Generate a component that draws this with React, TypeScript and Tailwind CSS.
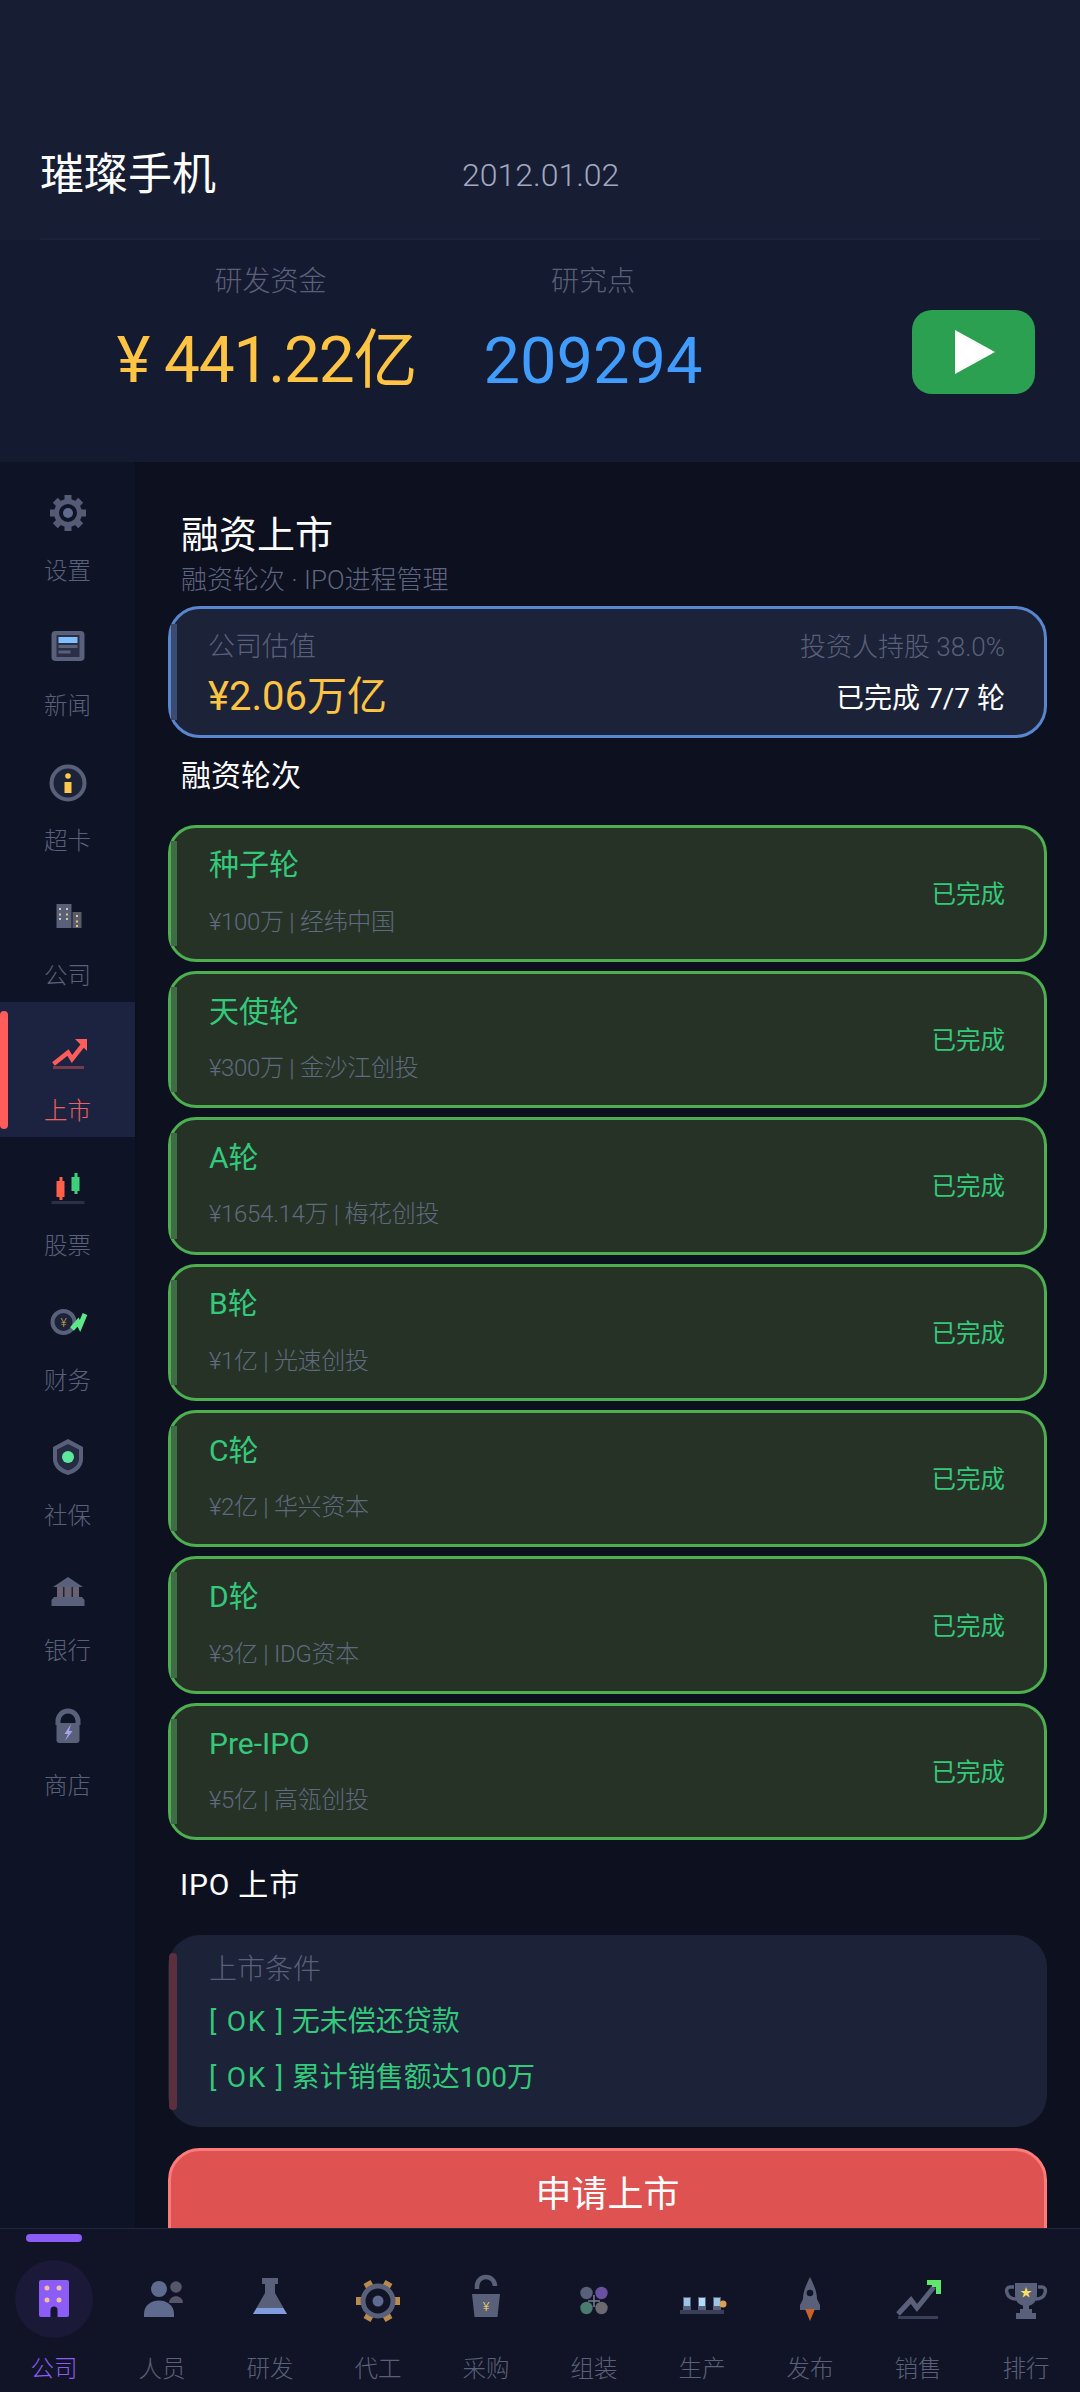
const rounds = [
  { name: "种子轮", info: "¥100万 | 经纬中国" },
  { name: "天使轮", info: "¥300万 | 金沙江创投" },
  { name: "A轮", info: "¥1654.14万 | 梅花创投" },
  { name: "B轮", info: "¥1亿 | 光速创投" },
  { name: "C轮", info: "¥2亿 | 华兴资本" },
  { name: "D轮", info: "¥3亿 | IDG资本" },
  { name: "Pre-IPO", info: "¥5亿 | 高瓴创投" },
];

const G = "#596079";

function GearIcon() {
  return (
    <svg width="48" height="48" viewBox="0 0 48 48">
      <g fill="#555b75">
        {[0, 45, 90, 135, 180, 225, 270, 315].map((a) => (
          <rect key={a} x="20.5" y="7" width="7" height="8" transform={`rotate(${a} 24 25)`} />
        ))}
      </g>
      <circle cx="24" cy="25" r="11.5" fill="none" stroke="#555b75" strokeWidth="5" />
      <circle cx="24" cy="25" r="5" fill="#5f6a8f" />
    </svg>
  );
}

function NewsIcon() {
  return (
    <svg width="48" height="48" viewBox="0 0 48 48">
      <rect x="7.5" y="8" width="33" height="30" rx="4" fill={G} />
      <rect x="12.5" y="12" width="23" height="22" fill="#2a2f45" />
      <rect x="14.5" y="14" width="19" height="6" fill="#7fbfff" />
      <rect x="14.5" y="22" width="19" height="3" fill={G} />
      <rect x="14.5" y="27.500" width="12" height="3" fill={G} />
    </svg>
  );
}

function CardIcon() {
  return (
    <svg width="48" height="48" viewBox="0 0 48 48">
      <circle cx="24" cy="25" r="16.500" fill="#1c2238" stroke={G} strokeWidth="4" />
      <circle cx="24" cy="18" r="2.800" fill="#ffc84a" />
      <rect x="20.500" y="24" width="7" height="11" fill="#ffc84a" />
    </svg>
  );
}

function CompanyIcon() {
  const dots = [6, 11.5, 16];
  return (
    <svg width="48" height="48" viewBox="0 0 48 48">
      <rect x="12.500" y="11" width="15" height="24" fill={G} />
      <rect x="28.500" y="19" width="9" height="16" fill="#5a5d68" />
      {dots.map((d) => (
        <g key={d} fill="#d8c890">
          <rect x="15" y={d + 9} width="2" height="2" />
          <rect x="22" y={d + 9} width="2" height="2" />
          <rect x="32" y={d + 16} width="2" height="2" />
        </g>
      ))}
    </svg>
  );
}

function ListingIcon() {
  return (
    <svg width="48" height="48" viewBox="0 0 48 48">
      <rect x="9" y="38" width="31" height="3" fill="#ff5c5c" opacity="0.4" />
      <path d="M9.500 36 L24 24.500 L28 31 L39 17" fill="none" stroke="#ff5c5c" strokeWidth="4.500" />
      <path d="M31 11 H43 V23 Z" fill="#ff5c5c" />
    </svg>
  );
}

function StockIcon() {
  return (
    <svg width="48" height="48" viewBox="0 0 48 48">
      <rect x="7.500" y="38" width="33" height="3" fill="#2c3048" />
      <rect x="15.500" y="14" width="3" height="23" fill="#ff6048" />
      <rect x="12.500" y="18" width="8" height="16" fill="#ff6048" />
      <rect x="30.500" y="10" width="3" height="21" fill="#3ecf7a" />
      <rect x="27.500" y="14" width="8" height="14" fill="#3ecf7a" />
    </svg>
  );
}

function FinanceIcon() {
  return (
    <svg width="48" height="48" viewBox="0 0 48 48">
      <circle cx="19.500" cy="24" r="11" fill="#1c2238" stroke={G} strokeWidth="4" />
      <text x="19.500" y="29" textAnchor="middle" fontSize="12" fill="#d8a848">¥</text>
      <path d="M28 31 L34 24 L36 28 L41 16" fill="none" stroke="#5ce88a" strokeWidth="5" />
    </svg>
  );
}

function ShieldIcon() {
  return (
    <svg width="48" height="48" viewBox="0 0 48 48">
      <path d="M24 6 L39 14 V26 C39 35 31 40 24 42 C17 40 9 35 9 26 V14 Z" fill={G} />
      <path d="M24 11 L35 16.500 V26 C35 32 29 36 24 37.500 C19 36 13 32 13 26 V16.500 Z" fill="#262b44" />
      <circle cx="24" cy="24" r="6" fill="#5ce89a" />
    </svg>
  );
}

function BankIcon() {
  return (
    <svg width="48" height="48" viewBox="0 0 48 48">
      <path d="M24 9 L39 19 H9 Z" fill={G} />
      <rect x="13" y="19" width="22" height="11" fill="#6b6070" />
      <rect x="19" y="19" width="1.500" height="11" fill="#1c2238" />
      <rect x="27.500" y="19" width="1.500" height="11" fill="#1c2238" />
      <path d="M10 29 H38 L40.500 32 V38 H7.500 V32 Z" fill={G} />
    </svg>
  );
}

function ShopIcon() {
  return (
    <svg width="48" height="48" viewBox="0 0 48 48">
      <path d="M14 22 V18 A10 10 0 0 1 34 18 V22" fill="none" stroke={G} strokeWidth="5" />
      <rect x="12.500" y="20" width="23" height="20" rx="3" fill={G} />
      <path d="M27 21 L20.500 31 H24 L21 38 L28.500 28 H25 Z" fill="#a8a0f0" />
    </svg>
  );
}

const sideItems = [
  { label: "设置", icon: <GearIcon /> },
  { label: "新闻", icon: <NewsIcon /> },
  { label: "超卡", icon: <CardIcon /> },
  { label: "公司", icon: <CompanyIcon /> },
  { label: "上市", icon: <ListingIcon />, active: true },
  { label: "股票", icon: <StockIcon /> },
  { label: "财务", icon: <FinanceIcon /> },
  { label: "社保", icon: <ShieldIcon /> },
  { label: "银行", icon: <BankIcon /> },
  { label: "商店", icon: <ShopIcon /> },
];

// bottom icons use a 64x64 box centred on the tab, y origin = 2268 in the page
function NavCompany() {
  return (
    <svg width="64" height="64" viewBox="0 0 64 64">
      <rect x="17" y="11" width="30" height="37" rx="2" fill="#8b5cf6" />
      <g fill="#f0c0a0">
        <circle cx="25" cy="19" r="2.500" />
        <circle cx="37" cy="19" r="2.500" />
        <circle cx="25" cy="31" r="2.500" />
        <circle cx="37" cy="31" r="2.500" />
      </g>
      <path d="M28.500 48 V41 A3.500 3.500 0 0 1 35.500 41 V48 Z" fill="#15152e" />
    </svg>
  );
}
function NavPeople() {
  return (
    <svg width="64" height="64" viewBox="0 0 64 64">
      <circle cx="46" cy="18" r="5.800" fill="#55566a" />
      <path d="M39 34 C39 25 53 25 53 34 Z" fill="#55566a" />
      <circle cx="29" cy="20" r="8" fill="#5f6a8f" />
      <path d="M14 48 V45 C14 27 44 27 44 45 V48 Z" fill="#5f6a8f" />
    </svg>
  );
}
function NavLab() {
  return (
    <svg width="64" height="64" viewBox="0 0 64 64">
      <rect x="24" y="9" width="16" height="6" fill={G} />
      <path d="M27 15 H37 V24 L49 45 H15 L27 24 Z" fill={G} />
      <path d="M18.800 39 H45.200 L49 45 H15 Z" fill="#7f9cdc" />
    </svg>
  );
}
function NavOem() {
  return (
    <svg width="64" height="64" viewBox="0 0 64 64">
      <g fill="#b98a4c">
        {[0, 60, 120, 180, 240, 300].map((a) => (
          <rect key={a} x="28" y="10" width="8" height="8" transform={`rotate(${a + 30} 32 32)`} />
        ))}
      </g>
      <circle cx="32" cy="32" r="15" fill="#111426" stroke={G} strokeWidth="5" />
      <circle cx="32" cy="32" r="5.500" fill="#5f6a8f" />
    </svg>
  );
}
function NavBuy() {
  return (
    <svg width="64" height="64" viewBox="0 0 64 64">
      <path d="M23 20 V17 A9 9 0 0 1 41 17" fill="none" stroke={G} strokeWidth="4.500" />
      <path d="M18 25 H46 L43.500 48 H20.500 Z" fill={G} />
      <text x="32" y="42" textAnchor="middle" fontSize="13" fill="#ffdf60">¥</text>
    </svg>
  );
}
function NavAssemble() {
  return (
    <svg width="64" height="64" viewBox="0 0 64 64">
      <circle cx="24.500" cy="24" r="6.200" fill={G} />
      <circle cx="39.500" cy="24" r="6.200" fill="#6a50a0" />
      <circle cx="24.500" cy="39" r="6.200" fill="#4b7a6e" />
      <circle cx="39.500" cy="39" r="6.200" fill="#6a6a70" />
      <path d="M32 26 V38 M26 32 H38" stroke="#777c90" strokeWidth="1.500" />
    </svg>
  );
}
function NavLine() {
  return (
    <svg width="64" height="64" viewBox="0 0 64 64">
      <rect x="10" y="41" width="44" height="4" fill="#3a3f58" />
      {[13, 28, 43].map((x, i) => (
        <g key={x}>
          <rect x={x} y="28" width="8" height="13" fill={G} />
          <rect x={x + 1} y="29" width="6" height="8" fill={i === 1 ? "#b0dcff" : "#9cc4e8"} />
        </g>
      ))}
      <circle cx="53" cy="35" r="3.500" fill="#d8a050" />
    </svg>
  );
}
function NavRocket() {
  return (
    <svg width="64" height="64" viewBox="0 0 64 64">
      <path d="M32 8 C37 18 39 24 39 30 L42 36 V41 H22 V36 L25 30 C25 24 27 18 32 8 Z" fill={G} />
      <circle cx="32" cy="24" r="3.300" fill="#111426" />
      <path d="M27 40 H37 L32 52 Z" fill="#c8622a" />
    </svg>
  );
}
function NavSales() {
  return (
    <svg width="64" height="64" viewBox="0 0 64 64">
      <rect x="12" y="47" width="40" height="3" fill="#3a3f58" />
      <path d="M12 45 L25 31 L31 39 L48 18" fill="none" stroke={G} strokeWidth="5" />
      <path d="M41 11 H55 V25 H50 V16 H41 Z" fill="#5ce86a" />
      <rect x="46" y="14" width="6" height="4" fill="#5ce86a" />
    </svg>
  );
}
function NavRank() {
  return (
    <svg width="64" height="64" viewBox="0 0 64 64">
      <path d="M20 18 H16 C13 18 12 21 13 24 C14 28 18 30 22 30" fill="none" stroke={G} strokeWidth="3.500" />
      <path d="M44 18 H48 C51 18 52 21 51 24 C50 28 46 30 42 30" fill="none" stroke={G} strokeWidth="3.500" />
      <path d="M21 14 H43 V26 C43 34 37 37 32 37 C27 37 21 34 21 26 Z" fill={G} />
      <rect x="29" y="36" width="6" height="8" fill={G} />
      <rect x="26" y="40" width="12" height="5" fill={G} />
      <rect x="22" y="44" width="20" height="6" fill={G} />
      <text x="32" y="28" textAnchor="middle" fontSize="12" fill="#ffdf60">★</text>
    </svg>
  );
}

const navItems = [
  { label: "公司", icon: <NavCompany />, active: true },
  { label: "人员", icon: <NavPeople /> },
  { label: "研发", icon: <NavLab /> },
  { label: "代工", icon: <NavOem /> },
  { label: "采购", icon: <NavBuy /> },
  { label: "组装", icon: <NavAssemble /> },
  { label: "生产", icon: <NavLine /> },
  { label: "发布", icon: <NavRocket /> },
  { label: "销售", icon: <NavSales /> },
  { label: "排行", icon: <NavRank /> },
];

export default function App() {
  return (
    <div className="w-[1080px] h-[2392px] flex flex-col overflow-hidden bg-[#0d101f] font-['Roboto','Noto_Sans_CJK_SC',sans-serif] font-light">
      {/* top header */}
      <header className="h-[240px] bg-[#171d33] flex flex-col justify-end shrink-0">
        <div className="flex items-end pl-[40px] pb-[38px]">
          <h1 className="w-[422px] text-[44px] leading-[50px] text-white font-normal">璀璨手机</h1>
          <span className="text-[32px] leading-[50px] text-[#a0a8c0]">2012.01.02</span>
        </div>
        <div className="mx-[40px] h-[2px] bg-[#1b2138]" />
      </header>

      {/* funds */}
      <section className="h-[222px] bg-[#141a2f] flex items-start pl-[118px] pr-[45px] shrink-0">
        <div className="w-[297px] flex flex-col items-center pt-[22px]">
          <span className="pl-[8px] text-[28px] leading-[40px] text-[#5a6079]">研发资金</span>
          <span className="mt-[18.5px] text-[64px] leading-[80px] tracking-[-1.2px] text-[#ffc444] font-normal whitespace-nowrap">¥ 441.22亿</span>
        </div>
        <div className="ml-[69px] w-[218px] flex flex-col items-center pt-[22px]">
          <span className="text-[28px] leading-[40px] text-[#5a6079]">研究点</span>
          <span className="mt-[18.5px] text-[65px] leading-[80px] text-[#409cff] font-normal">209294</span>
        </div>
        <button className="ml-auto mt-[70px] w-[123px] h-[84px] rounded-[20px] bg-[#2aa050] flex items-center justify-center">
          <svg className="ml-[3px]" width="40" height="44" viewBox="0 0 40 44">
            <path d="M0 0 L40 22 L0 44 Z" fill="#ffffff" />
          </svg>
        </button>
      </section>

      <div className="h-[1766px] flex shrink-0 overflow-hidden">
        {/* left sidebar */}
        <aside className="w-[137px] shrink-0 bg-[#0f1326] border-r-2 border-[#0b0e1c] flex flex-col">
          {sideItems.map((item) => (
            <div
              key={item.label}
              className={`relative h-[135px] flex flex-col items-center pt-[26px] ${item.active ? "bg-[#1c2340]" : ""}`}
            >
              {item.active && <div className="absolute left-0 top-[9px] w-[8px] h-[118px] rounded-full bg-[#ff5c5c]" />}
              {item.icon}
              <span className={`mt-[19px] text-[23.500px] leading-[32px] ${item.active ? "text-[#f06060]" : "text-[#5a6079]"}`}>
                {item.label}
              </span>
            </div>
          ))}
        </aside>

        {/* main panel */}
        <main className="flex-1 pl-[31px] pr-[33px] pt-[48px] overflow-hidden">
          <h2 className="pl-[13px] text-[38px] leading-[50px] text-white font-normal">融资上市</h2>
          <p className="pl-[13px] mt-[3px] text-[26px] leading-[34px] text-[#5f6580]">融资轮次 · IPO进程管理</p>

          <div className="relative mt-[8.5px] h-[132px] rounded-[32px] border-[3px] border-[#5a86d0] bg-[#1c2238] flex justify-between pl-[37px] pr-[39px] pt-[18.5px]">
            <div className="absolute left-0 top-[15px] bottom-[15px] w-[6px] bg-[#3a4a70]" />
            <div>
              <div className="text-[27px] leading-[40px] text-[#5a6079]">公司估值</div>
              <div className="mt-[3px] text-[40px] leading-[54px] text-[#ffc444] font-normal">¥2.06万亿</div>
            </div>
            <div className="text-right">
              <div className="text-[26px] leading-[40px] text-[#5a6079]">投资人持股 38.0%</div>
              <div className="mt-[9.5px] text-[28px] leading-[44px] text-white font-normal">已完成 7/7 轮</div>
            </div>
          </div>

          <h3 className="pl-[13px] mt-[17px] text-[30px] leading-[42px] text-white font-normal">融资轮次</h3>

          <div className="mt-[28px] flex flex-col gap-[9px]">
            {rounds.map((r) => (
              <div
                key={r.name}
                className="relative h-[137.4px] rounded-[28px] border-[3px] border-[#4caf50] bg-[#273227] flex items-center justify-between pl-[38px] pr-[39px]"
              >
                <div className="absolute left-0 top-[13px] bottom-[13px] w-[6px] bg-[#3f6b45]" />
                <div className="flex flex-col pb-[4.5px]">
                  <span className="text-[30px] leading-[42px] text-[#34c97a] font-normal">{r.name}</span>
                  <span className="mt-[19.5px] text-[24px] leading-[32px] tracking-[-0.3px] text-[#5e6a7e]">{r.info}</span>
                </div>
                <span className="pt-[3px] text-[24.500px] leading-[32px] text-[#34c97a] font-normal">已完成</span>
              </div>
            ))}
          </div>

          <h3 className="pl-[12px] mt-[23.5px] text-[30px] leading-[42px] tracking-[0.8px] text-white font-normal">IPO 上市</h3>

          <div className="relative mt-[29px] h-[192px] rounded-[32px] bg-[#1c2238] pl-[41px] pt-[15px]">
            <div className="absolute left-[1px] top-[18px] bottom-[17px] w-[8px] rounded-full bg-[#5c2f3f]" />
            <div className="text-[28px] leading-[40px] text-[#5a6079]">上市条件</div>
            <div className="mt-[12px] text-[28px] leading-[40px] text-[#34c97a] font-normal">
              <span className="tracking-[1.7px]">[ OK ]</span> 无未偿还贷款
            </div>
            <div className="mt-[16px] text-[28px] leading-[40px] text-[#34c97a] font-normal">
              <span className="tracking-[1.7px]">[ OK ]</span> 累计销售额达100万
            </div>
          </div>

          <button className="mt-[21px] w-full h-[120px] rounded-[32px] bg-[#de5252] border-[3px] border-[#ff7b7b] pb-[26px] text-[36px] leading-[48px] text-white font-normal">
            申请上市
          </button>
        </main>
      </div>

      {/* bottom tab bar */}
      <nav className="relative flex-1 bg-[#111426] border-t border-[#20243c] flex">
        {navItems.map((item) => (
          <div key={item.label} className="relative w-[108px] flex flex-col items-center pt-[40px]">
            {item.active && (
              <>
                <div className="absolute left-[26px] top-[5px] w-[56px] h-[8px] rounded-full bg-[#8b5cf6]" />
                <div className="absolute left-[15px] top-[31px] w-[78px] h-[78px] rounded-full bg-[#1a1a38]" />
              </>
            )}
            <div className="relative h-[64px]">{item.icon}</div>
            <span className={`mt-[20px] text-[23.500px] leading-[32px] ${item.active ? "text-[#8b5cf6]" : "text-[#5a6079]"}`}>
              {item.label}
            </span>
          </div>
        ))}
      </nav>
    </div>
  );
}
